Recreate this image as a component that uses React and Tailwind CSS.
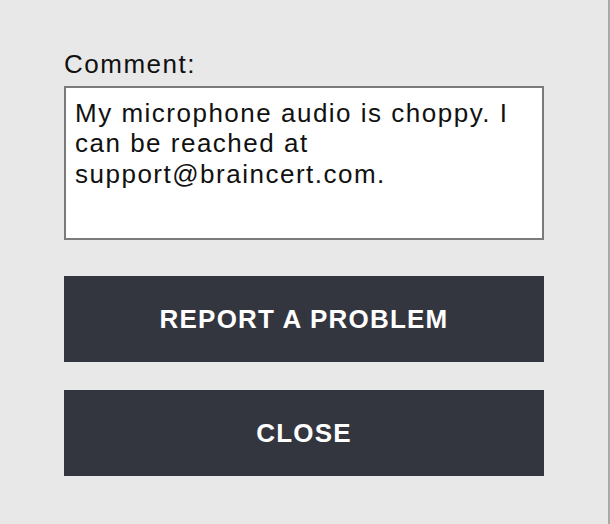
export default function App() {
  return (
    <div className="h-[524px] w-[610px] border-r-2 border-[#a9a9a9] bg-[#e8e8e8] pl-16 pt-[49px] font-['Liberation_Sans',Arial,sans-serif] text-[#111111]">
      <label className="block text-[26px] leading-[30px] tracking-[1.5px]">Comment:</label>
      <textarea
        className="mt-[7px] block h-[154px] w-[480px] resize-none border-2 border-[#7b7b7b] bg-white px-[9px] pt-[10px] text-[26px] leading-[30.4px] tracking-[1.5px] text-[#111111] outline-none"
        defaultValue="My microphone audio is choppy. I can be reached at support@braincert.com."
      />
      <div className="mt-9 flex w-[480px] flex-col gap-7">
        <button className="h-[86px] w-full bg-[#34363f] text-[26px] font-bold tracking-[1.2px] text-white">
          REPORT A PROBLEM
        </button>
        <button className="h-[86px] w-full bg-[#34363f] text-[26px] font-bold tracking-[1.2px] text-white">
          CLOSE
        </button>
      </div>
    </div>
  );
}
